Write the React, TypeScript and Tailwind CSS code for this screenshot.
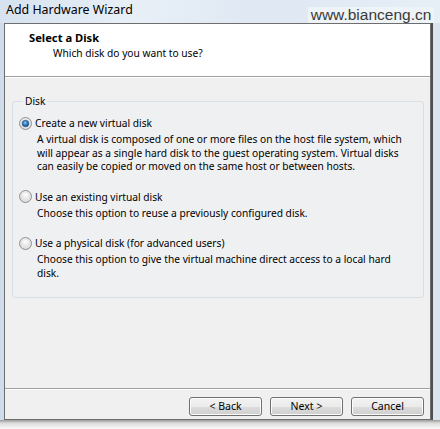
import React from "react";

function Radio({ checked }: { checked?: boolean }) {
  return (
    <svg width="13" height="13" viewBox="0 0 13 13" className="shrink-0">
      <defs>
        <radialGradient id={checked ? "rgOn" : "rgOff"} cx="0.5" cy="0.35" r="0.7">
          <stop offset="0" stopColor="#ffffff" />
          <stop offset="1" stopColor="#d0d0d0" />
        </radialGradient>
        <radialGradient id="dot" cx="0.45" cy="0.4" r="0.6">
          <stop offset="0" stopColor="#8cc7f0" />
          <stop offset="0.6" stopColor="#2a78c0" />
          <stop offset="1" stopColor="#123f6e" />
        </radialGradient>
      </defs>
      <circle cx="6.5" cy="6.5" r="6" fill={`url(#${checked ? "rgOn" : "rgOff"})`} stroke="#8f8f8f" strokeWidth="1" />
      <circle cx="6.5" cy="6.5" r="4.5" fill="none" stroke="#e4e4e4" strokeWidth="1" />
      {checked && <circle cx="6.5" cy="6.5" r="3.3" fill="url(#dot)" stroke="#1d4f80" strokeWidth="0.6" />}
    </svg>
  );
}

function Option({
  label,
  checked,
  lines,
}: {
  label: string;
  checked?: boolean;
  lines: string[];
}) {
  return (
    <div className="flex flex-col">
      <div className="flex items-center h-[14px] gap-[3px]">
        <Radio checked={checked} />
        <span className="leading-[14px] whitespace-nowrap">{label}</span>
      </div>
      <div className="pl-[18px] mt-[3px] leading-[13.5px]">
        {lines.map((l, i) => (
          <div key={i} className="whitespace-nowrap">
            {l}
          </div>
        ))}
      </div>
    </div>
  );
}

function Btn({ children }: { children: React.ReactNode }) {
  return (
    <button className="w-[73px] h-[19px] rounded-[3px] border border-[#707070] bg-[linear-gradient(#f2f2f2_0%,#ebebeb_50%,#dddddd_51%,#cfcfcf_100%)] shadow-[inset_0_0_0_1px_#fcfcfc] text-[10.5px] leading-[17px] text-black">
      {children}
    </button>
  );
}

export default function App() {
  return (
    <div
      className="w-[440px] h-[429px] flex flex-col overflow-hidden relative bg-[linear-gradient(90deg,#d6e2ef_0%,#e8eff7_30%,#dfe8f3_60%,#e6eef6_100%)] text-[#000]"
      style={{ fontFamily: '"Noto Sans", "Open Sans", sans-serif' }}
    >
      {/* title bar */}
      <div className="h-[23px] flex items-center pl-[6px] pb-[3px] text-[12.4px] text-black shrink-0">
        Add Hardware Wizard
      </div>

      {/* watermark */}
      <div
        className="absolute left-[308px] top-[7px] w-[126px] h-[16px] bg-[#edf3f7] flex items-center justify-center text-[15.5px] text-[#3a3a3a] leading-[16px]"
        style={{ fontFamily: '"Liberation Sans", Arial, sans-serif' }}
      >
        www.bianceng.cn
      </div>

      <div className="flex h-[397px] shrink-0">
        <div className="w-[4px] bg-[#cfdceb]" />
        {/* client */}
        <div className="w-[427px] border border-[#6e6e6e] flex flex-col bg-[#f0f0f0]">
          {/* header */}
          <div className="h-[52px] bg-white pt-[6px] shrink-0">
            <div className="pl-[24px] text-[11.2px] font-bold leading-[16px]">Select a Disk</div>
            <div className="pl-[48px] text-[10.2px] leading-[15px]">Which disk do you want to use?</div>
          </div>
          <div className="h-[1px] bg-[#a0a0a0] shrink-0" />
          <div className="h-[1px] bg-white shrink-0" />

          {/* body */}
          <div className="h-[310px] pt-[16px] pl-[7px] pr-[6px] text-[10.2px] shrink-0">
            <fieldset className="border border-[#d5dfe5] rounded-[3px] pl-[6px] pt-[8px] pb-[17px] bg-[#eff0f2]">
              <legend className="ml-[4px] px-[2px] leading-[14px]">Disk</legend>
              <div className="flex flex-col gap-[16px]">
                <Option
                  checked
                  label="Create a new virtual disk"
                  lines={[
                    "A virtual disk is composed of one or more files on the host file system, which",
                    "will appear as a single hard disk to the guest operating system. Virtual disks",
                    "can easily be copied or moved on the same host or between hosts.",
                  ]}
                />
                <Option
                  label="Use an existing virtual disk"
                  lines={["Choose this option to reuse a previously configured disk."]}
                />
                <Option
                  label="Use a physical disk (for advanced users)"
                  lines={[
                    "Choose this option to give the virtual machine direct access to a local hard",
                    "disk.",
                  ]}
                />
              </div>
            </fieldset>
          </div>

          {/* footer */}
          <div className="h-[1px] bg-[#a0a0a0] shrink-0" />
          <div className="h-[1px] bg-white shrink-0" />
          <div className="flex-1 flex justify-end items-start pt-[7px] pr-[6px] gap-[8px]">
            <Btn>&lt; Back</Btn>
            <Btn>Next &gt;</Btn>
            <Btn>Cancel</Btn>
          </div>
        </div>
        <div className="w-[2px] bg-[#4e4e4e]" />
        <div className="flex-1 bg-[#d9e4ef]" />
      </div>
      <div className="flex-1 bg-[linear-gradient(#9a9a9a_0%,#dcdcdc_35%,#fafafa_100%)]" />
    </div>
  );
}
